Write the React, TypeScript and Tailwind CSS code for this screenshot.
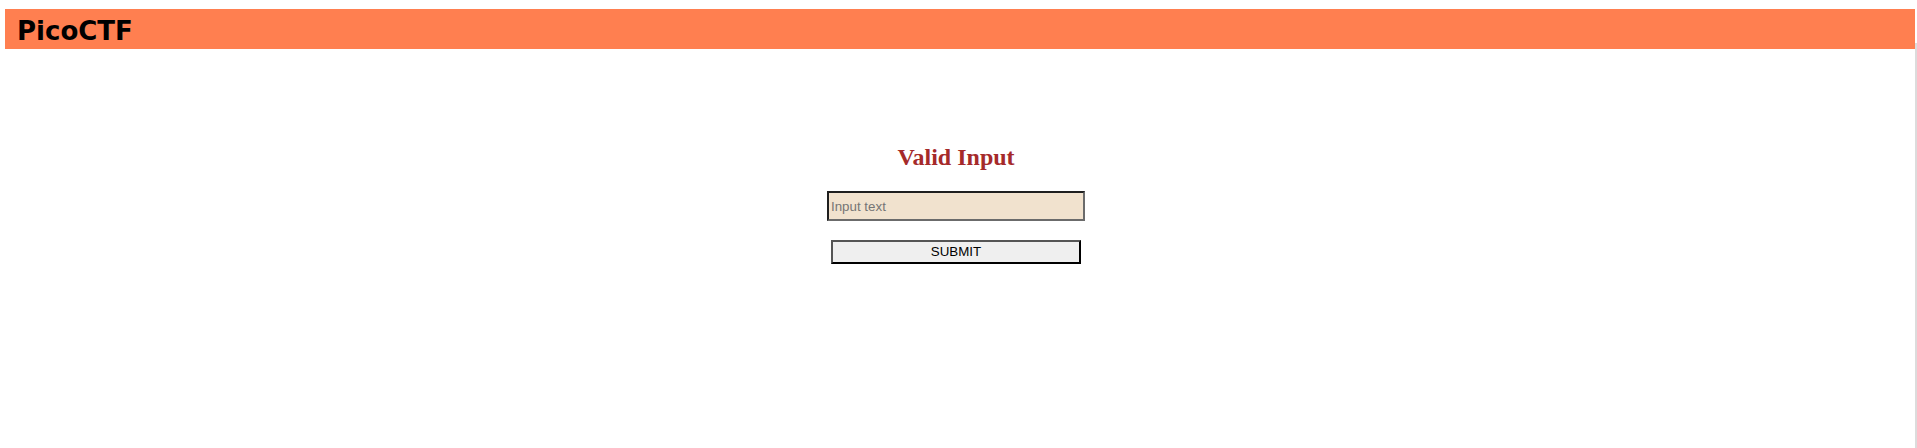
import { useState } from "react";

function Header({ title }: { title: string }) {
    return (
        <div className="ml-[5px] mt-[9px] h-[40px] bg-[#FF7F50] pl-[12px] pt-[5px]">
            <h1 className="font-['DejaVu_Sans',sans-serif] font-bold text-[26px] leading-[35px] text-black">
                {title}
            </h1>
        </div>
    )
}

export default function App() {
    const [value, setValue] = useState("");

    return (
        <div className="flex w-full h-[448px] bg-white">
            <div className="flex-1 flex flex-col">
                <Header title="PicoCTF" />
                <div className="flex flex-col items-center pr-[3px] pt-[95px]">
                    <h2 className="font-['Liberation_Serif',serif] font-bold text-[24px] leading-[27px] text-[#A52A2A]">
                        Valid Input
                    </h2>
                    <input
                        value={value}
                        onChange={(e) => setValue(e.target.value)}
                        placeholder="Input text"
                        className="mt-[20px] w-[258px] h-[30px] px-[2px] bg-[#F1E2CE] border-2 border-t-[#1f1f1f] border-l-[#1f1f1f] border-b-[#6b6b6b] border-r-[#6b6b6b] font-['Liberation_Sans',sans-serif] text-[13.33px] text-black placeholder:text-[#757575] outline-none"
                    />
                    <button className="mt-[19px] w-[250px] h-[24px] bg-[#EFEFEF] border-2 border-t-[#555555] border-l-[#555555] border-b-black border-r-black font-['Liberation_Sans',sans-serif] text-[13.33px] text-black leading-none">
                        SUBMIT
                    </button>
                </div>
            </div>
            <div className="w-[2px] flex flex-col pt-[43px]">
                <div className="flex-1 bg-[#DCDCDC]" />
            </div>
        </div>
    )
}
